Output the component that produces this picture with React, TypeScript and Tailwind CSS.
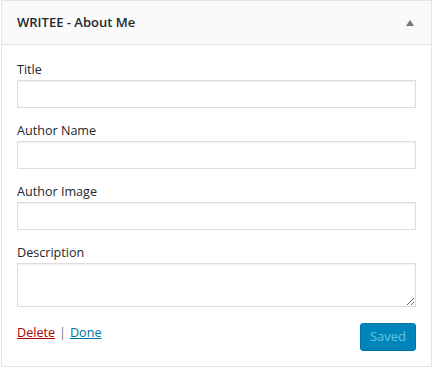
const Field = ({ label, tall }: { label: string; tall?: boolean }) => {
  return (
    <div className="flex flex-col">
      <label className="h-[20px] leading-[20px] text-[12.6px] text-[#23282d]">{label}</label>
      {tall ? (
        <textarea className="h-[44px] w-full border border-[#ddd] shadow-[inset_0_1px_2px_rgba(0,0,0,0.07)] bg-white outline-none" />
      ) : (
        <input
          type="text"
          className="h-[28px] w-full border border-[#ddd] shadow-[inset_0_1px_2px_rgba(0,0,0,0.07)] bg-white outline-none"
        />
      )}
    </div>
  );
};

export default function App() {
  return (
    <div
      className="bg-white w-[433px] h-[369px] pl-px"
      style={{ fontFamily: '"Open Sans", "Noto Sans", sans-serif' }}
    >
      <div className="w-[431px] h-[367px] border border-[#e5e5e5] bg-white flex flex-col">
        <div className="h-[44px] bg-[#fafafa] border-b border-[#e5e5e5] flex items-center justify-between pl-[15px] pr-[17px]">
          <h3 className="text-[13px] font-semibold text-[#23282d]">WRITEE - About Me</h3>
          <svg width="8" height="6" viewBox="0 0 8 6">
            <path d="M4 0 L8 6 L0 6 Z" fill="#72777c" />
          </svg>
        </div>
        <div className="px-[15px] pt-[15px] flex flex-col gap-[13px]">
          <Field label="Title" />
          <Field label="Author Name" />
          <Field label="Author Image" />
          <Field label="Description" tall />
        </div>
        <div className="px-[15px] pt-[16px] flex items-start justify-between">
          <div className="text-[12.6px] pt-[1px] flex gap-[4px]">
            <a href="#" className="text-[#a00] underline">Delete</a>
            <span className="text-[#72777c]">|</span>
            <a href="#" className="text-[#0073aa] underline">Done</a>
          </div>
          <button className="h-[28px] w-[56px] rounded-[3px] bg-[#0085ba] border border-[#0073aa] text-[#66c6e4] text-[13px]">
            Saved
          </button>
        </div>
      </div>
    </div>
  );
}
